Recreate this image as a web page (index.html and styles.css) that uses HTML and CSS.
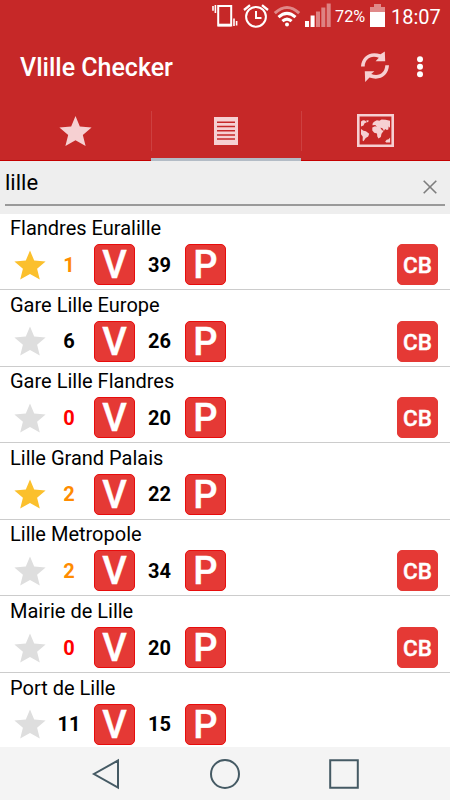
FILE: index.html
```html
<!DOCTYPE html>
<html lang="en">
<head>
<meta charset="utf-8">
<title>Vlille Checker</title>
<link rel="stylesheet" href="styles.css">
</head>
<body>
<svg class="defs" width="0" height="0">
  <symbol id="star" viewBox="0 0 32 30"><path d="M16 .4 20.2 10.6 31.6 11.6 23.1 18.8 25.8 29.6 16 24 6.2 29.6 8.9 18.8.4 11.6 11.8 10.6Z"/></symbol>
</svg>
<div class="screen">
  <header class="status">
    <svg class="s-vibrate" width="26" height="24" viewBox="0 0 26 24" fill="none" stroke="#fff"><rect x="6.2" y="2" width="13" height="19.5" stroke-width="2"/><path d="M6 21h13" stroke-width="2.6"/><path d="M1 2v4.8M3.4 1v8" stroke-width="1.6"/><path d="M22 14.5v7.5M24.6 17v4.5" stroke-width="1.6"/></svg>
    <svg class="s-alarm" width="26" height="24" viewBox="0 0 26 24" fill="none" stroke="#fff"><circle cx="13" cy="12.8" r="9.9" stroke-width="2"/><path d="M13 7v7h5.5" stroke-width="2"/><path d="M1 6 7 1.1M25 6 19 1.1" stroke-width="2.3"/></svg>
    <svg class="s-wifi" width="28" height="24" viewBox="0 0 28 24" fill="none" stroke="#fff" stroke-width="3"><path d="M1.8 9.2Q14-2.1 26.2 9.2" opacity=".45"/><path d="M5.5 13.2Q14 5.5 22.5 13.2M9.4 17.2Q14 13 18.6 17.2"/><circle cx="14" cy="20.6" r="2" fill="#fff" stroke="none"/></svg>
    <svg class="s-signal" width="26" height="24" viewBox="0 0 26 24" fill="#fff"><path d="M0 18h4v6H0zM5.6 12.5h4V24h-4z"/><path d="M11 8.5h4V24h-4zM16.3 4.5h4V24h-4zM21.7.5h4V24h-4z" opacity=".42"/></svg>
    <span class="battery-text">72%</span>
    <svg class="s-battery" width="15" height="23" viewBox="0 0 15 23" fill="#fff"><path d="M4 0h7v3h4v5H0V3h4z" opacity=".45"/><path d="M0 8h15v15H0z"/></svg>
    <span class="clock">18:07</span>
  </header>
  <div class="appbar">
    <h1>Vlille Checker</h1>
    <svg class="refresh" width="28" height="32" viewBox="0 0 28 32"><g fill="#f6d0d2"><path d="M0 15.5C.5 5.5 9-.5 19.5 3.3L23.8.5 24.2 10.3H14.6L17.8 6.8C10 3.8 4 8 3.7 15.5Z"/><path d="M28 14.3C27.5 24.3 19 30.3 8.5 26.5L4.2 31 3.8 20.3H13.4L10.2 23C18 26 24 21.8 24.3 14.3Z"/></g></svg>
    <svg class="more" width="8" height="24" viewBox="0 0 8 24" fill="#fff"><circle cx="4" cy="4.3" r="3"/><circle cx="4" cy="11.8" r="3"/><circle cx="4" cy="19.3" r="3"/></svg>
  </div>
  <nav class="tabs">
    <div class="tab"><svg class="tab-star" width="33" height="32"><use href="#star"/></svg></div>
    <div class="tab active"><svg width="24" height="28" viewBox="0 0 24 28"><path fill="#f6d0d2" d="M0 0h24v28H0z"/><path d="M3 5.3h18M3 9.5h18M3 13.7h18M3 17.9h18M3 22.1h18" stroke="#c62828" stroke-width="1.5"/></svg></div>
    <div class="tab"><svg width="37" height="33" viewBox="0 0 37 33"><path fill="#f6d0d2" d="M0 0h37v33H0z"/><path fill="#c62828" d="M2.6 2.6h31.8v27.8H2.6z"/><path fill="#f6d0d2" d="M4 7.5 6 6.2l2 .4 1.8 1.6-2.2 1L6.500 11.500 4 12.500ZM9.500 6.200l2.300.4-.8 1.700-1.300-.4ZM4 15l2.500 1.800 2.400.4 3.300 2.600-1 2.700-2.500 1.500-2.200 3.300-.9-.8.2-3.800L4 20.300ZM15.300 13.400l2.700-1.200 3 .8 2.200.4 1.800 2.900 1.700.4-2.200 3-.7 3.200-2.300 1.700-1.200-2-.3-3.200-2.800-.6-1.900-2.200ZM15.400 11.200l.4-2.200 1.700-1.600 2.400-1.200 2.500.6 2.200-1.300 4 .2 4.400 1v7l-1.400-1.300-.3 3-1.500.6-1.600-1-1.200 1.800-1.600-2.600-2.300-.8-3.200-.7-1.600-1.700ZM28.200 27.600l1.500-1.800 1.900-.6 1.500-1.600v5h-4Z"/></svg></div>
  </nav>
  <div class="search">
    <div class="field"><span>lille</span><svg width="14" height="14" viewBox="0 0 14 14"><path d="M.7.7l12.6 12.6M13.3.7.7 13.3" stroke="#7d7d7d" stroke-width="1.6"/></svg></div>
  </div>
  <main class="list">
    <section class="station"><h2>Flandres Euralille</h2><div class="info"><svg class="fav on"><use href="#star"/></svg><b class="count low">1</b><span class="badge">V</span><b class="count">39</b><span class="badge">P</span><span class="badge cb">CB</span></div></section>
    <section class="station"><h2>Gare Lille Europe</h2><div class="info"><svg class="fav"><use href="#star"/></svg><b class="count">6</b><span class="badge">V</span><b class="count">26</b><span class="badge">P</span><span class="badge cb">CB</span></div></section>
    <section class="station"><h2>Gare Lille Flandres</h2><div class="info"><svg class="fav"><use href="#star"/></svg><b class="count none">0</b><span class="badge">V</span><b class="count">20</b><span class="badge">P</span><span class="badge cb">CB</span></div></section>
    <section class="station"><h2>Lille Grand Palais</h2><div class="info"><svg class="fav on"><use href="#star"/></svg><b class="count low">2</b><span class="badge">V</span><b class="count">22</b><span class="badge">P</span></div></section>
    <section class="station"><h2>Lille Metropole</h2><div class="info"><svg class="fav"><use href="#star"/></svg><b class="count low">2</b><span class="badge">V</span><b class="count">34</b><span class="badge">P</span><span class="badge cb">CB</span></div></section>
    <section class="station"><h2>Mairie de Lille</h2><div class="info"><svg class="fav"><use href="#star"/></svg><b class="count none">0</b><span class="badge">V</span><b class="count">20</b><span class="badge">P</span><span class="badge cb">CB</span></div></section>
    <section class="station"><h2>Port de Lille</h2><div class="info"><svg class="fav"><use href="#star"/></svg><b class="count">11</b><span class="badge">V</span><b class="count">15</b><span class="badge">P</span></div></section>
  </main>
  <footer class="navbar">
    <svg width="30" height="32" viewBox="0 0 30 32"><path d="M27 2.5v27L3 16Z"/></svg>
    <svg width="32" height="32" viewBox="0 0 32 32"><circle cx="16" cy="16" r="14"/></svg>
    <svg width="32" height="32" viewBox="0 0 32 32"><path d="M2.2 2.2h27.6v27.6H2.2z"/></svg>
  </footer>
</div>
</body>
</html>
```

FILE: styles.css
```css
* { box-sizing: border-box; }
body { margin: 0; font-family: Roboto, sans-serif; color: #000; }
svg { display: block; flex: none; }
.defs { position: absolute; }
.screen { width: 450px; height: 800px; display: flex; flex-direction: column; overflow: hidden; background: #fff; }

.status { height: 33px; flex: none; display: flex; align-items: flex-start; padding: 4px 0 0 212px; background: #c62828; color: #fff; }
.s-alarm { margin-left: 5px; }
.s-wifi { margin-left: 4px; }
.s-signal { margin: -1px 0 0 4px; }
.battery-text { width: 30px; margin-left: 4px; font-size: 16.3px; line-height: 26px; white-space: nowrap; }
.s-battery { margin-left: 5px; }
.clock { margin: 0 0 0 6px; font-size: 20px; line-height: 27px; white-space: nowrap; }

.appbar { height: 68px; flex: none; display: flex; align-items: center; padding: 0 26px 0 20px; background: #c62828; color: #fff; }
.appbar h1 { flex: 1; margin: 2px 0 0; font-size: 25px; font-weight: 500; line-height: 30px; }
.refresh { margin-right: 27px; }

.tabs { height: 60px; flex: none; display: grid; grid-template-columns: repeat(3, 1fr); background: #c62828; border-bottom: 1px solid #c40000; }
.tab { display: flex; align-items: center; justify-content: center; padding: 3px 0 0 1px; border-bottom: 2px solid transparent; background: linear-gradient(#cd4040, #cd4040) left 10px / 1px 40px no-repeat; }
.tab:first-child { background: none; }
.tab.active { margin: 0 -1px -1px 1px; padding: 3px 1px 0 0; border-bottom: 3px solid #b3bcc6; }
.tab:last-child { margin-left: 1px; padding: 2px 0 0; }
.tab-star { fill: #f6d0d2; }

.search { height: 52.7px; flex: none; padding: 0 5px; background: #eee; }
.field { height: 45px; display: flex; justify-content: space-between; align-items: center; padding: 0 8px 0 0; border-bottom: 2px solid #999; font-size: 22px; }
.field span { margin-top: 0; }
.field svg { margin-top: 8px; }

.list { height: 533.8px; flex: none; overflow: hidden; }
.station { height: 76.55px; border-bottom: 1px solid #ccc; padding-top: 1.6px; }
.station h2 { margin: 0; padding-left: 10px; font-size: 20px; font-weight: 400; line-height: 26px; height: 29px; }
.info { height: 41px; display: flex; align-items: center; padding: 0 12px 0 14px; }
.fav { width: 32px; height: 30px; fill: #dedede; }
.fav.on { fill: #fbc02d; }
.count { width: 50px; padding-right: 1px; font-size: 20px; line-height: 24px; text-align: center; }
.fav + .count { width: 48px; padding: 0 2px 0 0; }
.low { color: #ff8c00; }
.none { color: #f00; }
.badge { width: 41px; height: 41px; flex: none; border: 1px solid #e80c0c; border-radius: 5px; background: #e53935; color: #fff; font-size: 38px; font-weight: 500; line-height: 41px; text-align: center; -webkit-text-stroke: .4px #fff; }
.badge.cb { margin-left: auto; border-color: #e53935; font-size: 22.5px; line-height: 41px; }

.navbar { flex: 1; display: flex; padding: 10.5px 0 0 91px; background: #f4f4f4; }
.navbar svg { fill: none; stroke: #455a64; stroke-width: 2; margin-right: 88px; }
.navbar svg:nth-child(2) { margin-right: 87px; }
```
